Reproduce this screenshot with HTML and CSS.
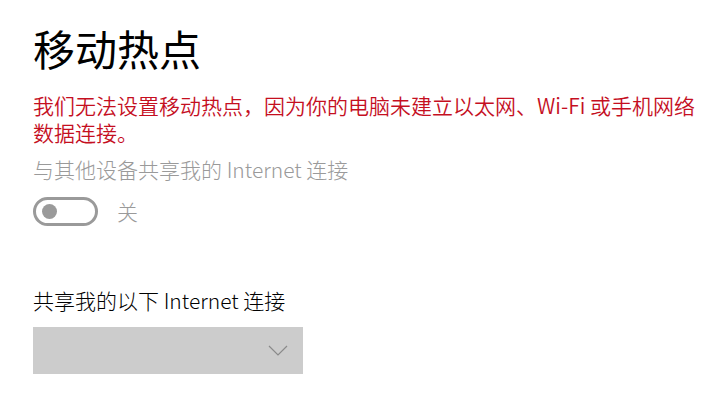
FILE: index.html
```html
<!DOCTYPE html>
<html lang="zh-CN">
<head>
<meta charset="utf-8">
<title>移动热点</title>
<link rel="stylesheet" href="styles.css">
</head>
<body>
<main class="page">
  <h1 class="title">移动热点</h1>
  <p class="error">我们无法设置移动热点，因为你的电脑未建立以太网、Wi-Fi 或手机网络数据连接。</p>
  <div class="label label-disabled">与其他设备共享我的 Internet 连接</div>
  <div class="toggle-row">
    <span class="toggle"><span class="knob"></span></span>
    <span class="toggle-text">关</span>
  </div>
  <div class="label section-label">共享我的以下 Internet 连接</div>
  <div class="select">
    <svg class="chevron" width="20" height="11" viewBox="0 0 20 11" aria-hidden="true">
      <path d="M1 1 L10 10 L19 1" fill="none" stroke="#8a8a8a" stroke-width="1.2"/>
    </svg>
  </div>
</main>
</body>
</html>
```

FILE: styles.css
```css
html, body {
  margin: 0;
  padding: 0;
  background: #ffffff;
}

body {
  font-family: "Noto Sans CJK SC", sans-serif;
  font-weight: 300;
  color: #000000;
}

.page {
  padding: 22px 0 0 33px;
  width: 680px;
}

.title {
  margin: 0;
  font-size: 42px;
  line-height: 52px;
  font-weight: 400;
}

.error {
  margin: 18px 0 0 0;
  font-size: 21px;
  line-height: 27px;
  color: #c50f1f;
  font-weight: 350;
}

.label {
  font-size: 21px;
  line-height: 27px;
}

.label-disabled {
  margin-top: 10px;
  color: #9a9a9a;
}

.toggle-row {
  display: flex;
  align-items: center;
  margin-top: 14px;
  gap: 19px;
}

.toggle {
  box-sizing: border-box;
  width: 65px;
  height: 29px;
  border: 3px solid #9a9a9a;
  border-radius: 15px;
  display: flex;
  align-items: center;
  padding-left: 6px;
}

.knob {
  width: 15px;
  height: 15px;
  border-radius: 50%;
  background: #9a9a9a;
}

.toggle-text {
  font-size: 21px;
  line-height: 27px;
  color: #9a9a9a;
}

.section-label {
  margin-top: 61px;
}

.select {
  margin-top: 13px;
  width: 270px;
  height: 47px;
  background: #cccccc;
  display: flex;
  align-items: center;
  justify-content: flex-end;
  box-sizing: border-box;
}

.chevron {
  margin-right: 15px;
}
```
